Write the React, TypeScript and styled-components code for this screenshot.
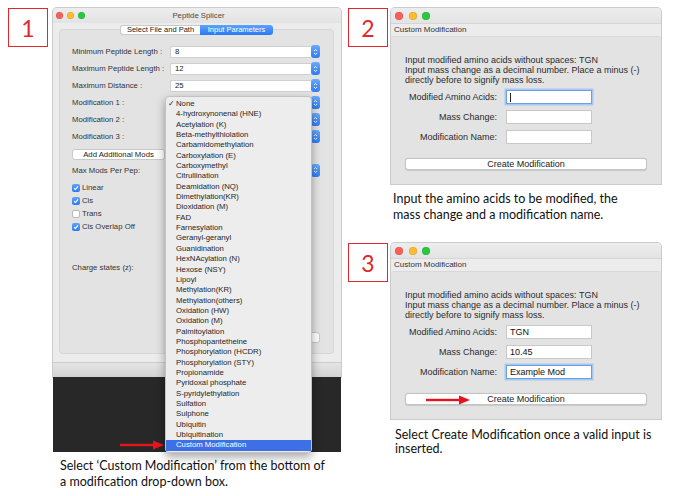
import React from "react";
import styled, { createGlobalStyle, css } from "styled-components";

const GlobalStyle = createGlobalStyle`
  html, body { margin: 0; padding: 0; background: #ffffff; }
  body {
    width: 686px; height: 496px; overflow: hidden;
    font-family: "Liberation Sans", Arial, sans-serif; color: #333;
  }
  * { box-sizing: border-box; }
`;

const Page = styled.div`
  display: flex;
  align-items: flex-start;
  gap: 7px;
  padding: 8px 0 0 8px;
  width: 686px;
  height: 496px;
`;

const LeftColumn = styled.div`
  display: grid;
  grid-template-columns: 40px 288px;
  column-gap: 5px;
  align-items: start;
`;

const RightColumn = styled.div`
  display: flex;
  flex-direction: column;
`;

const Figure = styled.div<{ $mt?: number }>`
  display: grid;
  grid-template-columns: 40px 270px;
  column-gap: 3px;
  align-items: start;
  margin-top: ${(p) => p.$mt ?? 0}px;
`;

const NumBox = styled.div`
  width: 40px;
  height: 39px;
  border: 1px solid #e3262b;
  display: flex;
  align-items: center;
  justify-content: center;
  color: #e3262b;
  font-family: Lato, "Liberation Sans", sans-serif;
  font-size: 23px;
  background: #fff;
`;

const Caption = styled.p<{ $size: number; $lh: number; $mt: number; $pl: number }>`
  grid-column: 2;
  margin: ${(p) => p.$mt}px 0 0;
  padding-left: ${(p) => p.$pl}px;
  font-family: Lato, "Open Sans", sans-serif;
  font-size: ${(p) => p.$size}px;
  line-height: ${(p) => p.$lh}px;
  color: #111;
`;

/* ---------- shared window chrome ---------- */

const Frame = styled.div`
  background: #ececec;
  box-shadow: 0 0 0 1px #cbcbcb;
  border-radius: 4px 4px 0 0;
  display: flex;
  flex-direction: column;
`;

const TitleBar = styled.div<{ $h: number; $pl: number }>`
  height: ${(p) => p.$h}px;
  display: grid;
  grid-template-columns: 1fr auto 1fr;
  align-items: center;
  padding-left: ${(p) => p.$pl}px;
  background: linear-gradient(#ededed, #e3e3e3);
  border-radius: 4px 4px 0 0;
`;

const Lights = styled.div<{ $gap: number }>`
  display: flex;
  gap: ${(p) => p.$gap}px;
`;

const Light = styled.span<{ $c: string; $size: number }>`
  width: ${(p) => p.$size}px;
  height: ${(p) => p.$size}px;
  border-radius: 50%;
  background: ${(p) => p.$c};
  box-shadow: inset 0 0 0 0.5px rgba(0, 0, 0, 0.15);
`;

const WindowTitle = styled.div`
  font-size: 7.75px;
  color: #4a4a4a;
`;

const TrafficLights = ({ size, gap }: { size: number; gap: number }) => (
  <Lights $gap={gap}>
    <Light $c="#fc5f57" $size={size} />
    <Light $c="#fdbc2e" $size={size} />
    <Light $c="#2ac840" $size={size} />
  </Lights>
);

/* ---------- window 1 ---------- */

const Screen = styled.div`
  position: relative;
  display: flex;
  flex-direction: column;
`;

const Body1 = styled.div`
  padding: 2px 7px 8px 6px;
  display: flex;
  flex-direction: column;
`;

const TabBar = styled.div`
  display: flex;
  justify-content: center;
  height: 10px;
  margin-bottom: -6px;
  position: relative;
  z-index: 1;
`;

const Tab = styled.div<{ $active?: boolean; $w: number }>`
  width: ${(p) => p.$w}px;
  height: 10px;
  font-size: 7.5px;
  line-height: 10px;
  text-align: center;
  ${(p) =>
    p.$active
      ? css`
          background: linear-gradient(#5ea2f9, #2b78f3);
          color: #fff;
          border-radius: 0 3px 3px 0;
        `
      : css`
          background: #fff;
          color: #222;
          border: 1px solid #c9c9c9;
          border-right: none;
          line-height: 8px;
          border-radius: 3px 0 0 3px;
        `}
`;

const GroupBox = styled.div`
  height: 325px;
  background: #e3e3e3;
  border: 1px solid #d6d6d6;
  border-radius: 4px;
  padding: 13px 13px 0 12px;
  display: flex;
  flex-direction: column;
`;

const FieldRow = styled.div<{ $h?: number }>`
  display: flex;
  align-items: center;
  height: ${(p) => p.$h ?? 17}px;
`;

const FieldLabel = styled.div`
  width: 98px;
  font-size: 7.75px;
  color: #333;
  white-space: nowrap;
`;

const Field = styled.div`
  flex: 1;
  height: 12px;
  background: #fff;
  border: 1px solid #d0d0d0;
  border-right: none;
  border-radius: 2px 0 0 2px;
  font-size: 7.75px;
  color: #222;
  padding-left: 4px;
  display: flex;
  align-items: center;
`;

const StepperBox = styled.div`
  width: 9px;
  height: 13px;
  border-radius: 3px;
  background: linear-gradient(#6aaafb, #2e7bf5);
  display: flex;
  align-items: center;
  justify-content: center;
`;

const Stepper = () => (
  <StepperBox>
    <svg width="5" height="8" viewBox="0 0 5 8">
      <path d="M1 3 L2.5 1.5 L4 3 M1 5 L2.5 6.5 L4 5" stroke="#fff" strokeWidth="0.9" fill="none" />
    </svg>
  </StepperBox>
);

const AddButton = styled.div`
  width: 93px;
  height: 11px;
  background: #fff;
  border: 1px solid #c9c9c9;
  border-radius: 3px;
  font-size: 7.75px;
  line-height: 9px;
  text-align: center;
  color: #222;
`;

const CheckGroup = styled.div`
  margin-top: 4px;
  display: flex;
  flex-direction: column;
`;

const CheckRow = styled.div`
  display: flex;
  align-items: center;
  gap: 2px;
  height: 13px;
  font-size: 7.75px;
  color: #333;
`;

const Box = styled.span<{ $on?: boolean }>`
  width: 8px;
  height: 8px;
  border-radius: 2px;
  display: flex;
  align-items: center;
  justify-content: center;
  ${(p) =>
    p.$on
      ? css`
          background: linear-gradient(#5fa3fa, #2d79f4);
        `
      : css`
          background: #fff;
          border: 1px solid #b9b9b9;
        `}
`;

const CheckBox = ({ on }: { on?: boolean }) => (
  <Box $on={on}>
    {on && (
      <svg width="6" height="6" viewBox="0 0 6 6">
        <path d="M1 3.2 L2.4 4.6 L5 1.4" stroke="#fff" strokeWidth="1.1" fill="none" />
      </svg>
    )}
  </Box>
);

const RunRow = styled.div`
  margin-top: 58px;
  display: flex;
  justify-content: flex-end;
`;

const RunButton = styled.div`
  width: 120px;
  height: 11px;
  background: #fff;
  border: 1px solid #c9c9c9;
  border-radius: 3px;
`;

const WindowFooter = styled.div`
  height: 15px;
  border-top: 1px solid #cdcdcd;
  background: linear-gradient(#e4e4e4, #d3d3d3);
`;

const Desktop = styled.div`
  height: 75px;
  background: #282828;
`;

const Menu = styled.div`
  position: absolute;
  left: 112px;
  top: 88px;
  width: 147px;
  padding: 2px 0 1px;
  background: #ededed;
  border: 1px solid #c2c2c2;
  border-radius: 4px;
  box-shadow: 0 4px 10px rgba(0, 0, 0, 0.35);
  z-index: 5;
`;

const MenuItem = styled.div<{ $hi?: boolean }>`
  position: relative;
  height: 10.35px;
  line-height: 10.35px;
  padding-left: 10px;
  font-size: 7.75px;
  color: #262626;
  white-space: nowrap;
  ${(p) =>
    p.$hi &&
    css`
      background: #3d70e6;
      color: #fff;
    `}
`;

const Tick = styled.span`
  position: absolute;
  left: 2px;
  top: 0;
  font-size: 7.5px;
`;

const ArrowOverlay = styled.div<{ $l: number; $t: number }>`
  position: absolute;
  left: ${(p) => p.$l}px;
  top: ${(p) => p.$t}px;
  line-height: 0;
  z-index: 6;
`;

const RedArrow = () => (
  <svg width="44" height="10" viewBox="0 0 44 10">
    <rect x="0" y="3.8" width="35" height="2.4" fill="#e8141c" />
    <polygon points="33,0.5 44,5 33,9.5" fill="#e8141c" />
  </svg>
);

const mods = [
  "None",
  "4-hydroxynonenal (HNE)",
  "Acetylation (K)",
  "Beta-methylthiolation",
  "Carbamidomethylation",
  "Carboxylation (E)",
  "Carboxymethyl",
  "Citrullination",
  "Deamidation (NQ)",
  "Dimethylation(KR)",
  "Dioxidation (M)",
  "FAD",
  "Farnesylation",
  "Geranyl-geranyl",
  "Guanidination",
  "HexNAcylation (N)",
  "Hexose (NSY)",
  "Lipoyl",
  "Methylation(KR)",
  "Methylation(others)",
  "Oxidation (HW)",
  "Oxidation (M)",
  "Palmitoylation",
  "Phosphopantetheine",
  "Phosphorylation (HCDR)",
  "Phosphorylation (STY)",
  "Propionamide",
  "Pyridoxal phosphate",
  "S-pyridylethylation",
  "Sulfation",
  "Sulphone",
  "Ubiquitin",
  "Ubiquitination",
  "Custom Modification",
];

const SelectRow = ({ label, value }: { label: string; value?: string }) => (
  <FieldRow>
    <FieldLabel>{label}</FieldLabel>
    <Field>{value}</Field>
    <Stepper />
  </FieldRow>
);

const PeptideSplicer = () => (
  <Screen>
    <Frame>
      <TitleBar $h={15} $pl={3}>
        <TrafficLights size={7} gap={4} />
        <WindowTitle>Peptide Splicer</WindowTitle>
        <span />
      </TitleBar>
      <Body1>
        <TabBar>
          <Tab $w={80}>Select File and Path</Tab>
          <Tab $w={73} $active>
            Input Parameters
          </Tab>
        </TabBar>
        <GroupBox>
          <SelectRow label="Minimum Peptide Length :" value="8" />
          <SelectRow label="Maximum Peptide Length :" value="12" />
          <SelectRow label="Maximum Distance :" value="25" />
          <SelectRow label="Modification 1 :" />
          <SelectRow label="Modification 2 :" />
          <SelectRow label="Modification 3 :" />
          <FieldRow $h={18}>
            <AddButton>Add Additional Mods</AddButton>
          </FieldRow>
          <FieldRow $h={14}>
            <FieldLabel>Max Mods Per Pep:</FieldLabel>
            <Field />
            <Stepper />
          </FieldRow>
          <CheckGroup>
            <CheckRow>
              <CheckBox on />
              Linear
            </CheckRow>
            <CheckRow>
              <CheckBox on />
              Cis
            </CheckRow>
            <CheckRow>
              <CheckBox />
              Trans
            </CheckRow>
            <CheckRow>
              <CheckBox on />
              Cis Overlap Off
            </CheckRow>
          </CheckGroup>
          <FieldRow $h={14} style={{ marginTop: 27 }}>
            <FieldLabel>Charge states (z):</FieldLabel>
          </FieldRow>
          <RunRow>
            <RunButton />
          </RunRow>
        </GroupBox>
      </Body1>
      <WindowFooter />
    </Frame>
    <Desktop />
    <Menu>
      {mods.map((m, i) => (
        <MenuItem key={m} $hi={i === mods.length - 1}>
          {i === 0 && <Tick>✓</Tick>}
          {m}
        </MenuItem>
      ))}
    </Menu>
    <ArrowOverlay $l={67} $t={432}>
      <RedArrow />
    </ArrowOverlay>
  </Screen>
);

/* ---------- custom modification dialog ---------- */

const Band = styled.div`
  height: 13px;
  border-top: 1px solid #d6d6d6;
  padding-left: 3px;
  font-size: 8px;
  line-height: 12px;
  color: #333;
`;

const DialogGroup = styled.div`
  height: 148px;
  background: #e3e3e3;
  border-top: 1px solid #d9d9d9;
  border-radius: 3px 3px 0 0;
  padding: 18px 14px 14px;
  display: flex;
  flex-direction: column;
`;

const Note = styled.div`
  font-size: 9px;
  line-height: 10px;
  color: #2b2b2b;
  white-space: nowrap;
`;

const Form = styled.div`
  margin-top: 2px;
  display: flex;
  flex-direction: column;
`;

const FormRow = styled.div`
  display: grid;
  grid-template-columns: 92px 86px;
  column-gap: 9px;
  align-items: center;
  height: 20px;
`;

const FormLabel = styled.div`
  text-align: right;
  font-size: 9px;
  color: #2b2b2b;
  white-space: nowrap;
`;

const TextBox = styled.div<{ $focus?: boolean }>`
  height: 14px;
  background: #fff;
  border: 1px solid #c8c8c8;
  font-size: 9px;
  color: #111;
  padding-left: 3px;
  display: flex;
  align-items: center;
  ${(p) =>
    p.$focus &&
    css`
      border-color: #6c9fe8;
      box-shadow: 0 0 0 1.5px #a8c7f4;
    `}
`;

const Caret = styled.span`
  width: 1px;
  height: 9px;
  background: #222;
`;

const PushButton = styled.div`
  position: relative;
  margin-top: 11px;
  height: 13px;
  background: #fff;
  border: 1px solid #c4c4c4;
  border-radius: 3px;
  font-size: 9px;
  color: #222;
  display: flex;
  align-items: center;
  justify-content: center;
  box-shadow: 0 0.5px 1px rgba(0, 0, 0, 0.12);
`;

const ButtonArrow = styled.span`
  position: absolute;
  left: 20px;
  top: 1px;
  line-height: 0;
`;

type DialogProps = {
  acids?: string;
  mass?: string;
  name?: string;
  focus: "acids" | "name";
  arrow?: boolean;
};

const CustomModDialog = ({ acids, mass, name, focus, arrow }: DialogProps) => (
  <Frame>
    <TitleBar $h={15} $pl={4}>
      <TrafficLights size={8} gap={5.5} />
      <span />
      <span />
    </TitleBar>
    <Band>Custom Modification</Band>
    <DialogGroup>
      <Note>Input modified amino acids without spaces: TGN</Note>
      <Note>Input mass change as a decimal number. Place a minus (-)</Note>
      <Note>directly before to signify mass loss.</Note>
      <Form>
        <FormRow>
          <FormLabel>Modified Amino Acids:</FormLabel>
          <TextBox $focus={focus === "acids"}>{acids ?? (focus === "acids" ? <Caret /> : null)}</TextBox>
        </FormRow>
        <FormRow>
          <FormLabel>Mass Change:</FormLabel>
          <TextBox>{mass}</TextBox>
        </FormRow>
        <FormRow>
          <FormLabel>Modification Name:</FormLabel>
          <TextBox $focus={focus === "name"}>{name}</TextBox>
        </FormRow>
      </Form>
      <PushButton>
        {arrow && (
          <ButtonArrow>
            <RedArrow />
          </ButtonArrow>
        )}
        Create Modification
      </PushButton>
    </DialogGroup>
  </Frame>
);

export default function App() {
  return (
    <>
      <GlobalStyle />
      <Page>
        <LeftColumn>
          <NumBox>1</NumBox>
          <PeptideSplicer />
          <Caption $size={12.5} $lh={16} $mt={6} $pl={7}>
            Select ‘Custom Modification’ from the bottom of
            <br />a modification drop-down box.
          </Caption>
        </LeftColumn>
        <RightColumn>
          <Figure>
            <NumBox>2</NumBox>
            <CustomModDialog focus="acids" />
            <Caption $size={12.5} $lh={16} $mt={7} $pl={2}>
              Input the amino acids to be modified, the
              <br />
              mass change and a modification name.
            </Caption>
          </Figure>
          <Figure $mt={20}>
            <NumBox>3</NumBox>
            <CustomModDialog focus="name" acids="TGN" mass="10.45" name="Example Mod" arrow />
            <Caption $size={12.5} $lh={14} $mt={9} $pl={4}>
              Select Create Modification once a valid input is
              <br />
              inserted.
            </Caption>
          </Figure>
        </RightColumn>
      </Page>
    </>
  );
}
